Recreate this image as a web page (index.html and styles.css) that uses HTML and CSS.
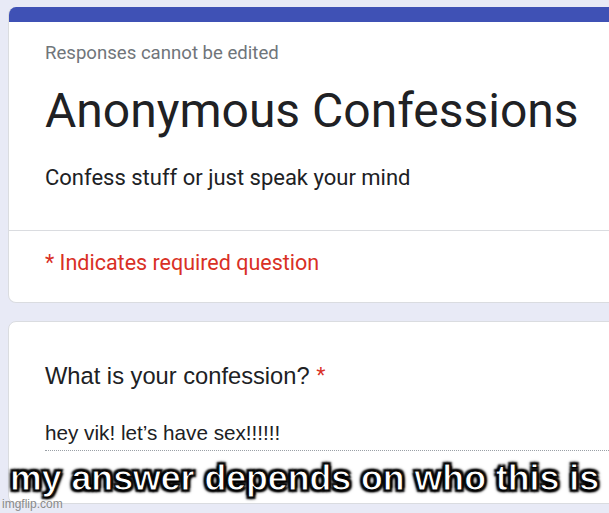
FILE: index.html
```html
<!DOCTYPE html>
<html lang="en">
<head>
  <meta charset="UTF-8" />
  <title>Anonymous Confessions</title>
  <link rel="stylesheet" href="styles.css">
</head>
<body>

  <div class="form">
    <div class="card intro">
      <div class="bar"></div>
      <div class="intro-body">
        <p class="note">Responses cannot be edited</p>
        <h1 class="title">Anonymous Confessions</h1>
        <p class="desc">Confess stuff or just speak your mind</p>
      </div>
      <div class="required">* Indicates required question</div>
    </div>

    <div class="card question">
      <div class="q-label">What is your confession? <span class="star">*</span></div>
      <div class="answer">hey vik! let’s have sex!!!!!!</div>
    </div>
  </div>

  <div class="caption">my answer depends on who this is</div>
  <div class="watermark">imgflip.com</div>

</body>
</html>
```

FILE: styles.css
```css
* {margin:0; padding:0; box-sizing:border-box;}

body {
  background: #e8eaf6;
  font-family: Roboto, "Liberation Sans", sans-serif;
  width: 609px;
  height: 513px;
  overflow: hidden;
  position: relative;
}

.form {
  width: 609px;
  overflow: hidden;
  padding: 7px 0 0 8px;
  display: flex;
  flex-direction: column;
  gap: 18px;
}

.card {
  background: #fff;
  border: 1px solid #dadce0;
  border-radius: 8px;
  width: 640px;
  flex-shrink: 0;
  overflow: hidden;
}

.intro {border-top: none;}

.bar {height: 15px; background: #3f51b5;}

.intro-body {
  padding: 19px 36px 0;
  height: 209px;
  border-bottom: 1px solid #dadce0;
}

.note {font-size: 18.6px; line-height: 24px; color: #70757a;}

.title {
  font-size: 48px;
  font-weight: 400;
  color: #202124;
  line-height: 56px;
  margin-top: 18px;
}

.desc {font-size: 22px; line-height: 26px; color: #202124; margin-top: 26px;}

.required {
  color: #d93025;
  font-size: 21.5px;
  line-height: 26px;
  padding: 19px 36px 26px;
}

.question {
  height: 183px;
  padding: 40px 0 0 36px;
}

.q-label {
  font-family: "Liberation Sans", Arial, sans-serif;
  font-size: 23.7px;
  line-height: 28px;
  color: #202124;
}

.star {color: #d93025;}

.answer {
  font-family: "Liberation Sans", Arial, sans-serif;
  font-size: 20.7px;
  line-height: 24px;
  color: #202124;
  margin-top: 31px;
  padding-bottom: 5px;
  border-bottom: 1px dotted #9aa0a6;
}

.caption {
  position: absolute;
  left: 0;
  top: 457px;
  width: 609px;
  text-align: center;
  font-family: "Liberation Sans", Arial, sans-serif;
  font-weight: bold;
  font-size: 35.7px;
  line-height: 42px;
  color: #fff;
  -webkit-text-stroke: 1px #000;
  text-shadow: 2px 2px 2px #000, -2px -2px 2px #000, 2px -2px 2px #000, -2px 2px 2px #000, 0 0 5px #000;
}

.watermark {
  position: absolute;
  left: 2px;
  top: 497px;
  font-family: "Liberation Sans", Arial, sans-serif;
  font-size: 12px;
  color: #8a8a8a;
}
```
